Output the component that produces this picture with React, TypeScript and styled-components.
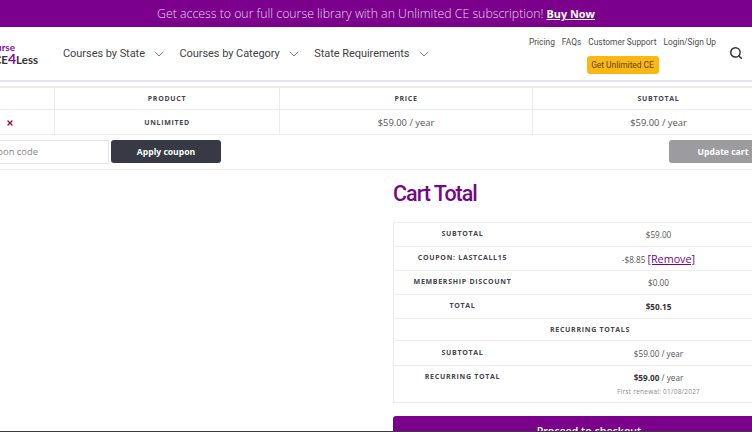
import { createGlobalStyle } from 'styled-components';
import styled from 'styled-components';
import { ChevronDown, Search, X } from 'lucide-react';

const purple = '#7b008b';
const line = '#ececec';

const GlobalStyle = createGlobalStyle`
	html, body {
		margin: 0;
		padding: 0;
		background: #fff;
		overflow: hidden;
	}
	* {
		box-sizing: border-box;
	}
`;

const Page = styled.div`
	width: 752px;
	height: 432px;
	overflow: hidden;
	position: relative;
	font-family: 'Open Sans', sans-serif;
	color: #555;
`;

const BottomEdge = styled.div`
	position: absolute;
	left: 0;
	right: 0;
	bottom: 0;
	height: 1px;
	background: #3a3a3a;
`;

const Banner = styled.div`
	height: 27px;
	background: ${purple};
	color: #e9d6ee;
	display: flex;
	align-items: center;
	justify-content: center;
	font-size: 12.3px;
	font-weight: 300;
	gap: 3px;
`;

const BuyNow = styled.a`
	color: #fff;
	font-weight: 700;
	font-size: 10.9px;
	text-decoration: underline;
`;

const Header = styled.header`
	height: 55px;
	border-bottom: 2px solid #ecdff1;
	display: flex;
	align-items: center;
	font-family: 'Roboto', sans-serif;
`;

const Logo = styled.div`
	width: 63px;
	margin-left: -25px;
	margin-right: 25px;
	flex: none;
	display: flex;
	flex-direction: column;
	align-items: flex-end;
	font-family: 'Lato', sans-serif;
	font-weight: 700;
`;

const LogoTop = styled.span`
	color: #8a0d9c;
	font-size: 10px;
	line-height: 10px;
	align-self: flex-start;
	margin-left: 21px;
`;

const LogoBottom = styled.span`
	color: #333;
	font-size: 11.5px;
	line-height: 13px;
	white-space: nowrap;
`;

const LogoFour = styled.span`
	color: #8a0d9c;
	font-size: 14px;
`;

const MainNav = styled.nav`
	display: flex;
	align-items: center;
	gap: 12.5px;
`;

const NavItem = styled.a`
	display: flex;
	align-items: center;
	gap: 6px;
	font-size: 11px;
	letter-spacing: -0.05px;
	color: #3f3f3f;
	white-space: nowrap;
`;

const Utility = styled.div`
	margin-left: auto;
	width: 187px;
	display: flex;
	flex-direction: column;
	align-items: center;
	gap: 9px;
	margin-right: 13px;
	margin-top: 4px;
`;

const UtilityLinks = styled.div`
	display: flex;
	gap: 7px;
	font-size: 8.4px;
	color: #4c4c4c;
	white-space: nowrap;
`;

const UnlimitedButton = styled.a`
	width: 72px;
	height: 18px;
	background: #fbb814;
	border-radius: 3px;
	color: #5c4610;
	font-size: 8.4px;
	display: flex;
	align-items: center;
	justify-content: center;
`;

const SearchButton = styled.div`
	margin-right: 9px;
	display: flex;
	color: #333;
	margin-top: -1px;
`;

const Cart = styled.section`
	width: 819px;
	margin-left: -34px;
	padding-top: 4px;
`;

const CartGrid = styled.div`
	display: grid;
	grid-template-columns: 89px 225px 253px 252px;
	border-top: 2px solid ${line};
`;

const Cell = styled.div<{ $tall?: boolean }>`
	height: ${(props) => (props.$tall ? 25 : 22)}px;
	border-right: 1px solid ${line};
	border-bottom: 1px solid ${line};
	display: flex;
	align-items: center;
	justify-content: center;
	font-size: 9.4px;
	color: #555;
`;

const Label = styled.span`
	font-size: 7px;
	font-weight: 700;
	letter-spacing: 0.7px;
	text-transform: uppercase;
	color: #44444c;
	white-space: nowrap;
`;

const TotalsLabel = styled(Label)`
	margin-top: -2px;
`;

const RemoveMark = styled.span`
	color: #a3101f;
	display: flex;
	margin-top: 1px;
`;

const CouponBar = styled.div`
	height: 35px;
	display: flex;
	align-items: center;
	gap: 2px;
	border-bottom: 1px solid ${line};
	padding-bottom: 1px;
`;

const CouponInput = styled.div`
	width: 143px;
	height: 24px;
	border: 1px solid #e4e4e4;
	font-size: 9.4px;
	color: #888;
	display: flex;
	align-items: center;
	padding-left: 13px;
`;

const CartButton = styled.a<{ $muted?: boolean }>`
	height: 23px;
	width: ${(props) => (props.$muted ? 108 : 110)}px;
	margin-left: ${(props) => (props.$muted ? 'auto' : '0')};
	margin-right: ${(props) => (props.$muted ? '8px' : '0')};
	background: ${(props) => (props.$muted ? '#9c9ca0' : '#373a44')};
	color: #fff;
	border-radius: 3px;
	display: flex;
	align-items: center;
	justify-content: center;
	font-size: 8.6px;
	font-weight: 700;
`;

const Totals = styled.div`
	margin-left: 427px;
	width: 392px;
`;

const Title = styled.h2`
	margin: 10px 0 14px;
	font-family: 'Roboto', sans-serif;
	font-size: 21.5px;
	line-height: 28px;
	font-weight: 500;
	letter-spacing: -1px;
	color: #75068a;
`;

const TotalsTable = styled.div`
	display: grid;
	grid-template-columns: 137px 255px;
	border-top: 1px solid ${line};
	border-left: 1px solid ${line};
`;

const TotalsCell = styled.div<{ $height: number; $span?: boolean; $top?: boolean }>`
	height: ${(props) => props.$height}px;
	grid-column: ${(props) => (props.$span ? '1 / span 2' : 'auto')};
	border-bottom: 1px solid ${line};
	display: flex;
	flex-direction: column;
	align-items: center;
	justify-content: ${(props) => (props.$top ? 'flex-start' : 'center')};
	padding-top: ${(props) => (props.$top ? '6px' : '0')};
	font-size: 8.2px;
	color: #555;
	white-space: nowrap;
`;

const Strong = styled.b`
	color: #333;
`;

const RemoveLink = styled.a`
	color: ${purple};
	font-size: 10.8px;
	text-decoration: underline;
	margin-left: 2px;
`;

const Amount = styled.span`
	display: flex;
	align-items: baseline;
`;

const Renewal = styled.small`
	font-size: 6.4px;
	color: #888;
	letter-spacing: 0.3px;
	margin-top: 4px;
`;

const Checkout = styled.a`
	display: flex;
	justify-content: center;
	height: 40px;
	margin-top: 13px;
	padding-top: 8px;
	background: ${purple};
	border-radius: 3px 3px 0 0;
	color: #fff;
	font-size: 10.6px;
	font-weight: 600;
`;

const App = () => (
	<Page>
		<GlobalStyle />
		<Banner>
			Get access to our full course library with an Unlimited CE subscription! <BuyNow>Buy Now</BuyNow>
		</Banner>
		<Header>
			<Logo>
				<LogoTop>urse</LogoTop>
				<LogoBottom>
					CE<LogoFour>4</LogoFour>Less
				</LogoBottom>
			</Logo>
			<MainNav>
				{['Courses by State', 'Courses by Category', 'State Requirements'].map((item) => (
					<NavItem key={item}>
						{item}
						<ChevronDown size={16} strokeWidth={1} />
					</NavItem>
				))}
			</MainNav>
			<Utility>
				<UtilityLinks>
					<span>Pricing</span>
					<span>FAQs</span>
					<span>Customer Support</span>
					<span>Login/Sign Up</span>
				</UtilityLinks>
				<UnlimitedButton>Get Unlimited CE</UnlimitedButton>
			</Utility>
			<SearchButton>
				<Search size={14} strokeWidth={2.5} />
			</SearchButton>
		</Header>
		<Cart>
			<CartGrid>
				<Cell />
				<Cell><Label>Product</Label></Cell>
				<Cell><Label>Price</Label></Cell>
				<Cell><Label>Subtotal</Label></Cell>
				<Cell $tall>
					<RemoveMark><X size={8} strokeWidth={4} /></RemoveMark>
				</Cell>
				<Cell $tall><Label>Unlimited</Label></Cell>
				<Cell $tall>$59.00 / year</Cell>
				<Cell $tall>$59.00 / year</Cell>
			</CartGrid>
			<CouponBar>
				<CouponInput>Coupon code</CouponInput>
				<CartButton>Apply coupon</CartButton>
				<CartButton $muted>Update cart</CartButton>
			</CouponBar>
			<Totals>
				<Title>Cart Total</Title>
				<TotalsTable>
					<TotalsCell $height={24}><TotalsLabel>Subtotal</TotalsLabel></TotalsCell>
					<TotalsCell $height={24}>$59.00</TotalsCell>
					<TotalsCell $height={24}><TotalsLabel>Coupon: lastcall15</TotalsLabel></TotalsCell>
					<TotalsCell $height={24}>
						<Amount>-$8.85 <RemoveLink>[Remove]</RemoveLink></Amount>
					</TotalsCell>
					<TotalsCell $height={24}><TotalsLabel>Membership discount</TotalsLabel></TotalsCell>
					<TotalsCell $height={24}>$0.00</TotalsCell>
					<TotalsCell $height={24}><TotalsLabel>Total</TotalsLabel></TotalsCell>
					<TotalsCell $height={24}><Strong>$50.15</Strong></TotalsCell>
					<TotalsCell $height={22} $span><Label>Recurring totals</Label></TotalsCell>
					<TotalsCell $height={25}><TotalsLabel>Subtotal</TotalsLabel></TotalsCell>
					<TotalsCell $height={25}>$59.00 / year</TotalsCell>
					<TotalsCell $height={37} $top><Label>Recurring total</Label></TotalsCell>
					<TotalsCell $height={37} $top>
						<span><Strong>$59.00</Strong> / year</span>
						<Renewal>First renewal: 01/08/2027</Renewal>
					</TotalsCell>
				</TotalsTable>
				<Checkout>Proceed to checkout</Checkout>
			</Totals>
		</Cart>
		<BottomEdge />
	</Page>
);

export default App;
